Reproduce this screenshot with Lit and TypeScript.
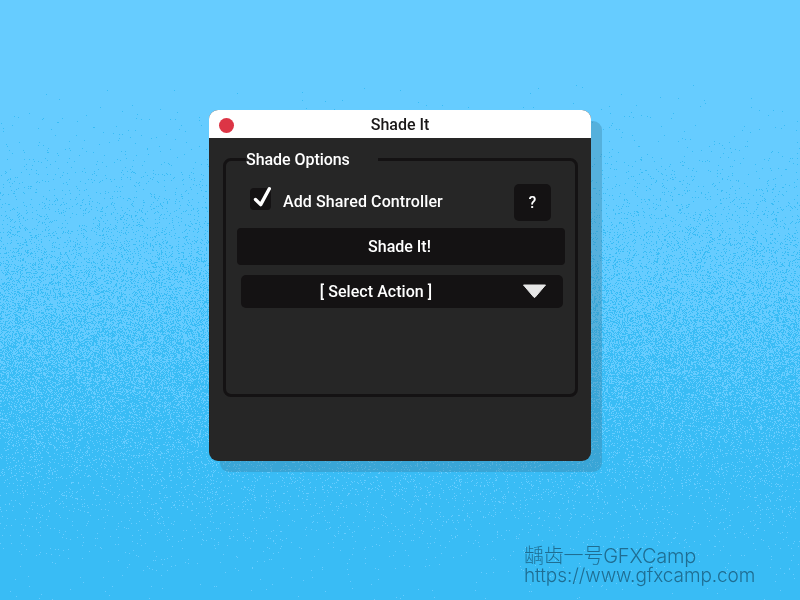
import { LitElement, html, svg, css } from "lit";
import { customElement, state } from "lit/decorators.js";

/** Two-tone dissolve from light to deep blue, from top to bottom. */
@customElement("grain-backdrop")
class GrainBackdrop extends LitElement {
  static styles = css`
    :host { display: block; width: 800px; height: 600px; background: #66ccff; }
    canvas { display: block; }
  `;

  firstUpdated() {
    const canvas = this.renderRoot.querySelector("canvas") as HTMLCanvasElement;
    const ctx = canvas.getContext("2d")!;
    const image = ctx.createImageData(800, 600);
    let seed = 48271;
    const random = () => {
      seed = (seed + 0x6d2b79f5) | 0;
      let t = Math.imul(seed ^ (seed >>> 15), 1 | seed);
      t = (t + Math.imul(t ^ (t >>> 7), 61 | t)) ^ t;
      return ((t ^ (t >>> 14)) >>> 0) / 4294967296;
    };
    for (let y = 0; y < 600; y++) {
      const z = (y - 348) / 90;
      const density = y < 85 ? 0 : 1 / (1 + Math.exp(-1.6 * z - 0.07 * z * z * z));
      for (let x = 0; x < 800; x++) {
        const deep = random() < density;
        const i = (y * 800 + x) * 4;
        image.data[i] = deep ? 57 : 102;
        image.data[i + 1] = deep ? 188 : 204;
        image.data[i + 2] = deep ? 245 : 255;
        image.data[i + 3] = 255;
      }
    }
    ctx.putImageData(image, 0, 0);
  }

  render() {
    return html`<canvas width="800" height="600"></canvas>`;
  }
}

@customElement("app-root")
class AppRoot extends LitElement {
  @state() private shared = true;

  static styles = css`
    :host {
      display: grid;
      width: 800px;
      height: 600px;
      overflow: hidden;
      font-family: Roboto, "Liberation Sans", sans-serif;
      font-size: 16px;
      font-weight: 500;
      color: #fff;
    }
    * { box-sizing: border-box; }
    grain-backdrop, .stage { grid-area: 1 / 1; }
    .stage {
      position: relative;
      padding: 110px 0 0 209px;
    }
    .window {
      width: 382px;
      height: 351px;
      border-radius: 9px;
      background: #262626;
      box-shadow: 11px 11px 0 rgba(57, 127, 160, 0.37);
      overflow: hidden;
    }
    .bar {
      display: grid;
      grid-template-columns: 35px 1fr 35px;
      grid-template-rows: 28px;
      align-items: center;
      height: 28px;
      background: #fff;
      color: #1a1818;
      text-align: center;
      line-height: 30px;
    }
    .title { line-height: 26px; padding-top: 2px; }
    .close {
      width: 15px;
      height: 15px;
      margin-left: 10px;
      margin-top: 2px;
      border-radius: 50%;
      background: #dc3545;
    }
    fieldset {
      width: 355px;
      height: 248px;
      margin: 11px 0 0 14px;
      padding: 14px 10px 0 11px;
      border: 3px solid #141213;
      border-radius: 8px;
      min-width: 0;
    }
    legend {
      width: 132px;
      height: 20px;
      margin-left: 9px;
      padding: 0;
      line-height: 22px;
      letter-spacing: -0.05px;
    }
    .row {
      display: flex;
      align-items: center;
      height: 38px;
    }
    .check {
      width: 24px;
      height: 25px;
      margin: -10px 10px 0 12px;
      flex: none;
    }
    .check svg { display: block; overflow: visible; }
    .label { padding-bottom: 2px; letter-spacing: 0.11px; }
    .help {
      width: 37px;
      height: 37px;
      margin-left: auto;
      margin-right: 14px;
      border-radius: 5px;
      background: #141213;
      text-align: center;
      line-height: 38px;
    }
    .button {
      height: 37px;
      margin-top: 7px;
      padding-right: 3px;
      border-radius: 4px;
      background: #141213;
      text-align: center;
      line-height: 38px;
    }
    .select {
      display: flex;
      align-items: center;
      width: 322px;
      height: 33px;
      margin: 10px 0 0 4px;
      padding-right: 16px;
      border-radius: 5px;
      background: #141213;
    }
    .value { flex: 1; padding-right: 11px; text-align: center; line-height: 33px; letter-spacing: 0.05px; }
    .mark {
      position: absolute;
      left: 524px;
      top: 547px;
      font-family: Inter, "Noto Sans CJK SC", sans-serif;
      font-weight: 300;
      font-size: 19px;
      line-height: 19px;
      letter-spacing: -0.08px;
      white-space: nowrap;
      color: #1f6d92;
    }
    .mark div { height: 19px; }
    .mark .owner { font-size: 20px; letter-spacing: -0.2px; }
  `;

  render() {
    return html`
      <grain-backdrop></grain-backdrop>
      <div class="stage">
        <div class="window">
          <div class="bar"><span class="close"></span><span class="title">Shade It</span></div>
          <fieldset>
            <legend>Shade Options</legend>
            <div class="row">
              <span class="check" @click=${() => (this.shared = !this.shared)}>
                <svg width="24" height="25" viewBox="0 0 24 25">
                  <rect x="1" y="3" width="21" height="22" rx="4" fill="#141213" />
                  ${this.shared
                    ? svg`<path d="M6.5 14.5 L11.7 19.6 L20.3 3.8" fill="none" stroke="#fff" stroke-width="3.4" stroke-linecap="round" stroke-linejoin="round" />`
                    : ""}
                </svg>
              </span>
              <span class="label">Add Shared Controller</span>
              <span class="help">?</span>
            </div>
            <div class="button">Shade It!</div>
            <div class="select">
              <span class="value">[ Select Action ]</span>
              <svg width="25" height="15" viewBox="0 0 25 15">
                <path d="M1.5 1 H23.5 L13.3 13 Q12.5 14 11.7 13 Z" fill="#e6e6e6" stroke="#e6e6e6" stroke-linejoin="round" />
              </svg>
            </div>
          </fieldset>
        </div>
        <div class="mark">
          <div class="owner">龋齿一号GFXCamp</div>
          <div>https://www.gfxcamp.com</div>
        </div>
      </div>
    `;
  }
}
